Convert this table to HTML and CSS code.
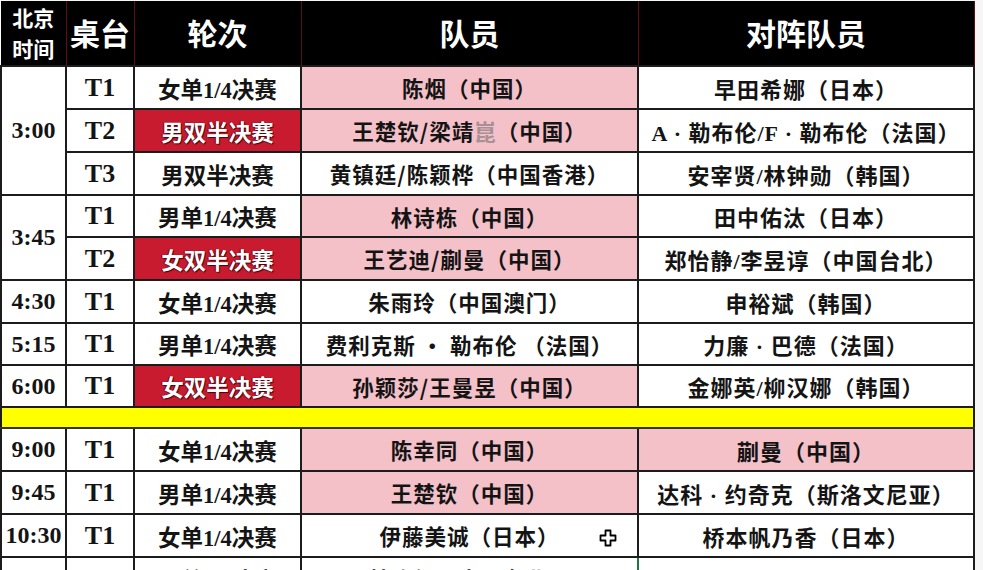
FILE: index.html
```html
<!DOCTYPE html>
<html lang="zh-CN">
<head>
<meta charset="utf-8">
<title>赛程</title>
<link rel="stylesheet" href="styles.css">
</head>
<body>
<table class="sched">
  <colgroup>
    <col class="c-time"><col class="c-tbl"><col class="c-round"><col class="c-p"><col class="c-o">
  </colgroup>
  <thead>
    <tr>
      <th class="h-time"><span class="ln">北京</span><span class="ln">时间</span></th>
      <th>桌台</th>
      <th>轮次</th>
      <th>队员</th>
      <th>对阵队员</th>
    </tr>
  </thead>
  <tbody>
    <tr class="r43">
      <td class="time" rowspan="3">3:00</td>
      <td class="tbl">T1</td>
      <td class="rnd">女单1/4决赛</td>
      <td class="pl pink">陈烟（中国）</td>
      <td class="op">早田希娜（日本）</td>
    </tr>
    <tr class="r43">
      <td class="tbl">T2</td>
      <td class="rnd red">男双半决赛</td>
      <td class="pl pink">王楚钦/梁靖<span class="faint">崑</span>（中国）</td>
      <td class="op">A · 勒布伦/F · 勒布伦（法国）</td>
    </tr>
    <tr class="r43">
      <td class="tbl">T3</td>
      <td class="rnd">男双半决赛</td>
      <td class="pl">黄镇廷/陈颖桦（中国香港）</td>
      <td class="op">安宰贤/林钟勋（韩国）</td>
    </tr>
    <tr class="r42">
      <td class="time" rowspan="2">3:45</td>
      <td class="tbl">T1</td>
      <td class="rnd">男单1/4决赛</td>
      <td class="pl pink">林诗栋（中国）</td>
      <td class="op">田中佑汰（日本）</td>
    </tr>
    <tr class="r43">
      <td class="tbl">T2</td>
      <td class="rnd red">女双半决赛</td>
      <td class="pl pink">王艺迪/蒯曼（中国）</td>
      <td class="op">郑怡静/李昱谆（中国台北）</td>
    </tr>
    <tr class="r43">
      <td class="time">4:30</td>
      <td class="tbl">T1</td>
      <td class="rnd">女单1/4决赛</td>
      <td class="pl">朱雨玲（中国澳门）</td>
      <td class="op">申裕斌（韩国）</td>
    </tr>
    <tr class="r42">
      <td class="time">5:15</td>
      <td class="tbl">T1</td>
      <td class="rnd">男单1/4决赛</td>
      <td class="pl">费利克斯 · 勒布伦 （法国）</td>
      <td class="op">力廉 · 巴德（法国）</td>
    </tr>
    <tr class="r42">
      <td class="time">6:00</td>
      <td class="tbl">T1</td>
      <td class="rnd red">女双半决赛</td>
      <td class="pl pink">孙颖莎/王曼昱（中国）</td>
      <td class="op">金娜英/柳汉娜（韩国）</td>
    </tr>
    <tr class="sep">
      <td colspan="5"></td>
    </tr>
    <tr class="r43">
      <td class="time">9:00</td>
      <td class="tbl">T1</td>
      <td class="rnd">女单1/4决赛</td>
      <td class="pl pink">陈幸同（中国）</td>
      <td class="op pink">蒯曼（中国）</td>
    </tr>
    <tr class="r43">
      <td class="time">9:45</td>
      <td class="tbl">T1</td>
      <td class="rnd">男单1/4决赛</td>
      <td class="pl pink">王楚钦（中国）</td>
      <td class="op">达科 · 约奇克（斯洛文尼亚）</td>
    </tr>
    <tr class="r43">
      <td class="time">10:30</td>
      <td class="tbl">T1</td>
      <td class="rnd">女单1/4决赛</td>
      <td class="pl cursor-cell">伊藤美诚（日本）
        <svg class="cursor" width="18" height="18" viewBox="0 0 18 18" aria-hidden="true">
          <path d="M6.5 1.5h5v5h5v5h-5v5h-5v-5h-5v-5h5z" fill="#fff" stroke="#000" stroke-width="1.8" stroke-linejoin="round"/>
        </svg>
      </td>
      <td class="op">桥本帆乃香（日本）</td>
    </tr>
    <tr class="r43">
      <td class="time">11:15</td>
      <td class="tbl">T1</td>
      <td class="rnd">男单1/4决赛</td>
      <td class="pl selected">林昀儒（中国台北）</td>
      <td class="op">张本智和（日本）</td>
    </tr>
  </tbody>
</table>
</body>
</html>
```

FILE: styles.css
```css
html, body {
  margin: 0;
  padding: 0;
  background: #f6f6f6;
  overflow: hidden;
}

body {
  padding-top: 1px;
}

.sched {
  border-collapse: collapse;
  table-layout: fixed;
  width: 973px;
  background: #fff;
  font-family: "Liberation Serif", "Noto Sans CJK SC", serif;
  font-weight: 700;
  color: #141414;
}

.c-time { width: 65px; }
.c-tbl { width: 68px; }
.c-round { width: 167px; }
.c-p { width: 337px; }
.c-o { width: 336px; }

.sched th {
  height: 64px;
  padding: 0;
  background: #000;
  color: #fff;
  font-family: "Noto Sans CJK SC", sans-serif;
  font-weight: 700;
  font-size: 30px;
  line-height: 1.45;
  border-left: 1px solid #5e0e16;
  border-right: 1px solid #5e0e16;
  text-align: center;
  vertical-align: middle;
}

.sched th.h-time {
  font-size: 21px;
  line-height: 31px;
  border-left: 0;
}

.ln {
  display: block;
}

.sched td {
  padding: 0;
  border: 2px solid #1c1c1c;
  text-align: center;
  vertical-align: middle;
  font-size: 22px;
  white-space: nowrap;
  overflow: hidden;
}

.r43 { height: 43px; }
.r42 { height: 42px; }

.sched td.time {
  font-size: 24px;
}

.sched td.tbl {
  font-size: 26px;
}

.sched td.rnd {
  font-size: 22.5px;
}

.pl, .op {
  font-family: "Noto Sans CJK SC", "Liberation Serif", sans-serif;
  letter-spacing: 1px;
}

.sched td.pl {
  font-size: 21.5px;
}

.sched td.op {
  font-size: 22px;
}

.op {
  font-family: "Liberation Serif", "Noto Sans CJK SC", serif;
}

.pink {
  background: #f4c1c9;
}

.red {
  background: #c91b30;
  color: #fff;
  text-shadow: 1px 1px 1px #4a0309, -1px 0 1px #6b0610;
}

.faint {
  color: #a89095;
}

.sep td {
  height: 19px;
  background: #ffff00;
  border-top: 2px solid #333;
  border-bottom: 2px solid #333;
}

.cursor-cell {
  position: relative;
}

.cursor {
  position: absolute;
  right: 20px;
  top: 14px;
}

.sched td.selected {
  border: 2px solid #217346;
}
```
